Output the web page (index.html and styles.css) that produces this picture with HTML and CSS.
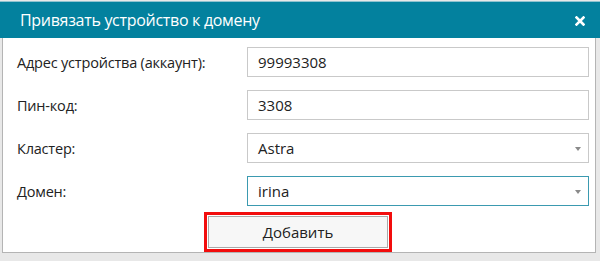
FILE: index.html
```html
<!DOCTYPE html>
<html lang="ru">
<head>
<meta charset="utf-8">
<link rel="stylesheet" href="styles.css">
</head>
<body>
<div class="dialog">
  <div class="header">
    <span class="title">Привязать устройство к домену</span>
    <svg class="close" width="10" height="10" viewBox="0 0 10 10"><path d="M1.5 1.5 L8.5 8.5 M8.5 1.5 L1.5 8.5" stroke="#fff" stroke-width="2.6" stroke-linecap="square"/></svg>
  </div>
  <div class="content">
    <div class="form">
      <label class="label">Адрес устройства (аккаунт):</label>
      <div class="field">99993308</div>
      <label class="label">Пин-код:</label>
      <div class="field">3308</div>
      <label class="label">Кластер:</label>
      <div class="field select">Astra<span class="arrow"></span></div>
      <label class="label">Домен:</label>
      <div class="field select focused">irina<span class="arrow"></span></div>
    </div>
    <div class="actions">
      <div class="highlight"><button class="btn">Добавить</button></div>
    </div>
  </div>
</div>
</body>
</html>
```
FILE: styles.css
```css
html, body {
  margin: 0;
  padding: 0;
}
body {
  width: 600px;
  height: 261px;
  background: #e8e8e8;
  font-family: "Open Sans", "Noto Sans", sans-serif;
  color: #222;
  overflow: hidden;
}
.header {
  margin-top: 1px;
  height: 37px;
  background: #03819e;
  border-top: 1px solid #8fc3d0;
  box-sizing: border-box;
  display: flex;
  align-items: center;
  justify-content: space-between;
  padding: 0 15px 0 20px;
}
.title {
  color: #fff;
  font-size: 16px;
  letter-spacing: -0.3px;
}
.close {
  display: block;
  margin-top: 2px;
}
.content {
  background: #fff;
  margin: 0 4px 0 2px;
  border: 1px solid #b4b4b4;
  border-top: none;
  height: 215px;
  box-sizing: border-box;
  padding: 9px 6px 0 14px;
}
.form {
  display: grid;
  grid-template-columns: 230px 342px;
  grid-auto-rows: 30px;
  row-gap: 13px;
  align-items: center;
}
.label {
  font-size: 14.5px;
  letter-spacing: -0.2px;
}
.field {
  height: 30px;
  box-sizing: border-box;
  border: 1px solid #c9c9c9;
  background: #fff;
  font-size: 15px;
  padding: 0 10px;
  display: flex;
  align-items: center;
  position: relative;
}
.field.focused {
  border-color: #3b9ab0;
}
.arrow {
  position: absolute;
  right: 7px;
  top: 13px;
  width: 0;
  height: 0;
  border-left: 3px solid transparent;
  border-right: 3px solid transparent;
  border-top: 4px solid #8a8a8a;
}
.actions {
  display: flex;
  justify-content: flex-start;
  padding-left: 187px;
  margin-top: 6px;
}
.highlight {
  border: 3px solid #f20d0d;
  padding: 1px;
}
.btn {
  display: block;
  width: 180px;
  height: 32px;
  border: 1px solid #a9a9a9;
  background: #f7f7f7;
  font-family: "Open Sans", "Noto Sans", sans-serif;
  font-size: 15px;
  color: #222;
  padding: 0;
}
```
